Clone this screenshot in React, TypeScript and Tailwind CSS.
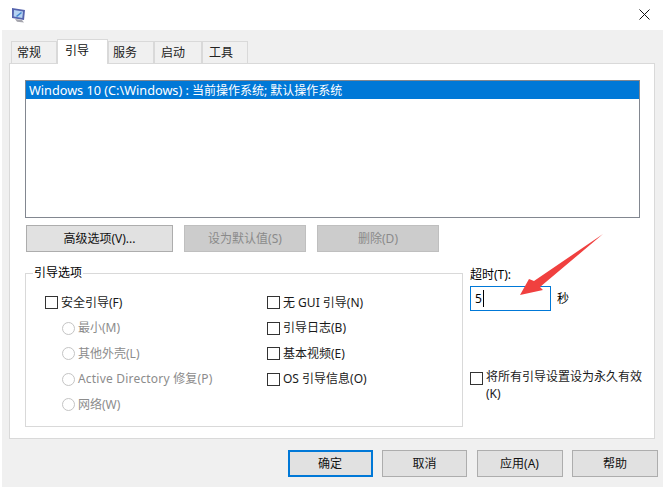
const font = "[font-family:'Noto_Sans','Noto_Sans_CJK_SC',sans-serif]";

const tabs = [
  { label: '常规', cls: 'w-[46px] pl-[5px]' },
  { label: '引导', cls: 'w-[51px] pl-[7px]' },
  { label: '服务', cls: 'w-[46px] pl-[4px]' },
  { label: '启动', cls: 'w-[48px] pl-[6px]' },
  { label: '工具', cls: 'w-[46px] pl-[6px]' },
];

const Check = ({ label }: { label: string }) => (
  <div className="flex items-center h-[25.5px]">
    <span className="w-[13px] h-[13px] border border-[#333] bg-white shrink-0" />
    <span className="ml-[3px] text-[#1a1a1a] whitespace-nowrap">{label}</span>
  </div>
);

const Radio = ({ label, wide }: { label: string; wide?: boolean }) => (
  <div className="flex items-center h-[25.5px] pl-[17px]">
    <span className="w-[13px] h-[13px] rounded-full border border-[#c4c4c4] bg-white shrink-0" />
    <span className={`ml-[3px] text-[#8c8c8c] whitespace-nowrap ${wide ? 'tracking-[0.2px]' : ''}`}>{label}</span>
  </div>
);

const Btn = ({ label, width, disabled, primary }: { label: string; width: string; disabled?: boolean; primary?: boolean }) => (
  <div
    className={`${width} h-[27px] flex items-center justify-center border ${
      disabled
        ? 'bg-[#cccccc] border-[#bfbfbf] text-[#8a8a8a]'
        : primary
          ? 'bg-[#e1e1e1] border-2 border-[#0078d7] text-[#111]'
          : 'bg-[#e1e1e1] border-[#adadad] text-[#111]'
    }`}
  >
    {label}
  </div>
);

export default function App() {
  return (
    <div className={`${font} relative w-[663px] h-[487px] bg-white overflow-hidden flex flex-col text-[12px] leading-none`}>
      {/* title bar */}
      <div className="h-[30px] shrink-0 flex items-center justify-between pl-[11px] pr-[13px]">
        <svg width="15" height="16" viewBox="0 0 15 16" className="-mt-[1px]">
          <path d="M1 1l13 2-1 10-12-2z" fill="#5563ad" />
          <path d="M3 3l9 1.4-.7 6.6-8.6-1.4z" fill="#b5d3f2" />
          <path d="M5 9l5-4 1 1-5 4z" fill="#3f86cf" />
          <path d="M4 12l7 1 2 2.5-7-.8z" fill="#a5a5ad" />
        </svg>
        <svg width="11" height="11" viewBox="0 0 11 11" className="-mt-[2px]">
          <path d="M.5.5l10 10M10.5.5l-10 10" stroke="#111" strokeWidth="1" fill="none" />
        </svg>
      </div>

      {/* dialog body */}
      <div className="flex-1 ml-[2px] bg-[#f0f0f0] pl-[7px] pr-[8px] flex flex-col">
        <div className="flex h-[33px] pl-[2px] items-end">
          {tabs.map((t, i) =>
            i === 1 ? (
              <div key={t.label} className={`${t.cls} h-[25px] bg-white border border-b-0 border-[#d9d9d9] -mb-px z-10 flex items-center pb-[2px] text-[#111]`}>
                {t.label}
              </div>
            ) : (
              <div key={t.label} className={`${t.cls} h-[22px] bg-[#f0f0f0] border border-b-0 border-[#d9d9d9] flex items-center pt-[1px] text-[#222]`}>
                {t.label}
              </div>
            )
          )}
        </div>

        <div className="h-[376px] bg-white border border-[#d9d9d9] pt-[16px] pl-[15px]">
          <div className="w-[615px] h-[138px] border border-[#828790] bg-white">
            <div className="h-[18px] bg-[#0078d7] text-white flex items-center pl-[3px] pt-px whitespace-nowrap">
              <span className="text-[12.7px] mr-[3px]">Windows 10 (C:\Windows) :</span>
              <span>当前操作系统; 默认操作系统</span>
            </div>
          </div>

          <div className="flex gap-[11px] mt-[7px] ml-px">
            <Btn label="高级选项(V)..." width="w-[147px]" />
            <Btn label="设为默认值(S)" width="w-[122px]" disabled />
            <Btn label="删除(D)" width="w-[122px]" disabled />
          </div>

          <div className="flex mt-[21px]">
            <div className="relative w-[438px] h-[154px] border border-[#d9d9d9] pl-[19px] pt-[16px] flex">
              <span className="absolute -top-[7px] left-[7px] bg-white px-px">引导选项</span>
              <div className="w-[222px]">
                <Check label="安全引导(F)" />
                <Radio label="最小(M)" />
                <Radio label="其他外壳(L)" />
                <Radio label="Active Directory 修复(P)" wide />
                <Radio label="网络(W)" />
              </div>
              <div>
                <Check label="无 GUI 引导(N)" />
                <Check label="引导日志(B)" />
                <Check label="基本视频(E)" />
                <Check label="OS 引导信息(O)" />
              </div>
            </div>

            <div className="ml-[7px] w-[172px] -mt-[6px]">
              <div className="h-[19px] flex items-start pt-[2px]">超时(T):</div>
              <div className="flex items-center">
                <div className="w-[81px] h-[25px] border border-[#0078d7] bg-white flex items-center pl-[4px]">
                  <span>5</span>
                  <span className="w-px h-[17px] bg-black ml-px" />
                </div>
                <span className="ml-[6px]">秒</span>
              </div>
              <div className="flex mt-[60px]">
                <span className="w-[13px] h-[13px] mt-px border border-[#333] bg-white shrink-0" />
                <span className="ml-[3px] -mt-[3px] leading-[17px] text-[#1a1a1a]">将所有引导设置设为永久有效(K)</span>
              </div>
            </div>
          </div>
        </div>

        <div className="flex justify-end gap-[9.5px] mt-[11px] -mr-[3px]">
          <Btn label="确定" width="w-[85px]" primary />
          <Btn label="取消" width="w-[85px]" />
          <Btn label="应用(A)" width="w-[86px]" />
          <Btn label="帮助" width="w-[86px]" />
        </div>
      </div>

      {/* red annotation arrow */}
      <svg className="absolute left-0 top-0" width="663" height="487" viewBox="0 0 663 487">
        <path d="M603 234L534 281 529 279 520 295 543 290 540 287Z" fill="#f0403f" />
      </svg>
    </div>
  );
}
